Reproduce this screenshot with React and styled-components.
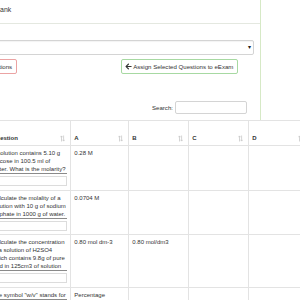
import React from "react";
import styled, { createGlobalStyle } from "styled-components";
import { FaArrowLeft } from "react-icons/fa";

const GlobalStyle = createGlobalStyle`
  html, body { margin: 0; padding: 0; background: #fff; }
  body {
    width: 300px;
    height: 300px;
    overflow: hidden;
    font-family: "Liberation Sans", Arial, Helvetica, sans-serif;
    font-size: 6.1px;
    line-height: 8px;
    color: #333;
  }
  *, *::before, *::after { box-sizing: border-box; }
`;

const Page = styled.div`
  margin-left: -80px;
  width: 341px;
`;

const Panel = styled.section`
  border: 1px solid #d6e9c6;
  border-top: none;
  border-radius: 0 0 3px 3px;
`;

const PanelHeading = styled.header`
  height: 24px;
  padding: 6px 0 0 45px;
  border-bottom: 1px solid #e4e8e0;
`;

const Title = styled.h3`
  margin: 0;
  font-size: 6.9px;
  line-height: 8px;
  font-weight: normal;
`;

const PanelBody = styled.div`
  padding: 16px 6px 0 6px;
`;

const SelectWrap = styled.div`
  position: relative;
  height: 15px;
  &::after {
    content: "▾";
    position: absolute;
    right: 3px;
    top: 3px;
    font-size: 6px;
    line-height: 8px;
    color: #222;
    pointer-events: none;
  }
`;

const Select = styled.select`
  appearance: none;
  display: block;
  width: 100%;
  height: 15px;
  padding: 0 4px;
  border: 1px solid #d4d4d4;
  border-radius: 2px;
  background: #fff;
  box-shadow: inset 0 1px 1px rgba(0, 0, 0, 0.05);
  font: inherit;
  color: #555;
`;

const ButtonRow = styled.div`
  display: flex;
  align-items: center;
  gap: 104px;
  margin-top: 4px;
  padding-left: 9px;
`;

const Button = styled.button`
  display: inline-flex;
  align-items: center;
  gap: 1px;
  height: 15px;
  padding: 0 4px 0 3px;
  background: #fff;
  border: 1px solid ${(p) => (p.$tone === "danger" ? "#eba3a3" : "#a7d9a2")};
  border-radius: 2px;
  font: inherit;
  color: #333;
  white-space: nowrap;
  svg { flex: none; }
`;

const FilterRow = styled.div`
  display: flex;
  justify-content: flex-end;
  margin-top: 27px;
  padding-right: 7px;
`;

const FilterLabel = styled.label`
  display: flex;
  align-items: center;
  gap: 2px;
`;

const SearchInput = styled.input`
  width: 72px;
  height: 13px;
  border: 1px solid #d4d4d4;
  border-radius: 2px;
  padding: 0 3px;
  font: inherit;
`;

const Table = styled.table`
  margin-top: 6px;
  width: 441px;
  table-layout: fixed;
  border-collapse: collapse;
  background: #fff;
  font-size: 6px;
`;

const Th = styled.th`
  width: ${(p) => p.$w}px;
  height: 25px;
  padding: 3.3px;
  vertical-align: bottom;
  text-align: left;
  font-weight: bold;
  border: 1px solid #e3e3e3;
  background: #fff;
`;

const HeadInner = styled.div`
  display: flex;
  justify-content: space-between;
  align-items: flex-end;
  padding-right: 1.5px;
`;

const Td = styled.td`
  padding: 3.3px;
  vertical-align: top;
  border: 1px solid #e3e3e3;
  background: #fff;
`;

const RowCheck = styled.input`
  width: 6px;
  height: 6px;
  margin: 0;
  display: block;
`;

const QuestionText = styled.div`
  border-bottom: 1px solid #8a8a8a;
`;

const AnswerInput = styled.input`
  display: block;
  width: 100%;
  height: 10px;
  margin-top: 2px;
  border: 1px solid #dcdcdc;
  padding: 0;
  background: #fff;
`;

const SortIcon = () => (
  <svg width="5" height="7" viewBox="0 0 10 14" fill="none" stroke="#c9c9c9" strokeWidth="1.6">
    <path d="M3 13V2M0.8 4.5L3 1.8L5.2 4.5" />
    <path d="M7.2 1V12M5 9.5L7.2 12.2L9.4 9.5" />
  </svg>
);

const rows = [
  {
    q: "A solution contains 5.10 g glucose in 100.5 ml of water. What is the molarity?",
    a: "0.28 M",
    b: "",
  },
  {
    q: "Calculate the molality of a solution with 10 g of sodium sulphate in 1000 g of water.",
    a: "0.0704 M",
    b: "",
  },
  {
    q: "Calculate the concentration of a solution of H2SO4 which contains 9.8g of pure acid in 125cm3 of solution",
    a: "0.80 mol dm-3",
    b: "0.80 mol/dm3",
  },
  {
    q: "The symbol \"w/v\" stands for",
    a: "Percentage weight/volume",
    b: "",
  },
];

const columns = [
  { label: "Question", w: 82.5 },
  { label: "A", w: 58 },
  { label: "B", w: 60 },
  { label: "C", w: 60 },
  { label: "D", w: 60 },
  { label: "Answer", w: 60 },
];

export default function App() {
  return (
    <>
      <GlobalStyle />
      <Page>
        <Panel>
          <PanelHeading>
            <Title>Question Bank</Title>
          </PanelHeading>
          <PanelBody>
            <SelectWrap>
              <Select defaultValue="">
                <option value="">Select eExam</option>
              </Select>
            </SelectWrap>
            <ButtonRow>
              <Button $tone="danger">Delete Selected Questions</Button>
              <Button $tone="success">
                <FaArrowLeft size={7} />
                Assign Selected Questions to eExam
              </Button>
            </ButtonRow>
            <FilterRow>
              <FilterLabel>
                Search:
                <SearchInput type="search" />
              </FilterLabel>
            </FilterRow>
            <Table>
              <thead>
                <tr>
                  <Th $w={60.5}>
                    <RowCheck type="checkbox" />
                  </Th>
                  {columns.map((c) => (
                    <Th key={c.label} $w={c.w}>
                      <HeadInner>
                        <span>{c.label}</span>
                        <SortIcon />
                      </HeadInner>
                    </Th>
                  ))}
                </tr>
              </thead>
              <tbody>
                {rows.map((r, i) => (
                  <tr key={i}>
                    <Td>
                      <RowCheck type="checkbox" />
                    </Td>
                    <Td>
                      <QuestionText>{r.q}</QuestionText>
                      <AnswerInput type="text" />
                    </Td>
                    <Td>{r.a}</Td>
                    <Td>{r.b}</Td>
                    <Td />
                    <Td />
                    <Td />
                  </tr>
                ))}
              </tbody>
            </Table>
          </PanelBody>
        </Panel>
      </Page>
    </>
  );
}
